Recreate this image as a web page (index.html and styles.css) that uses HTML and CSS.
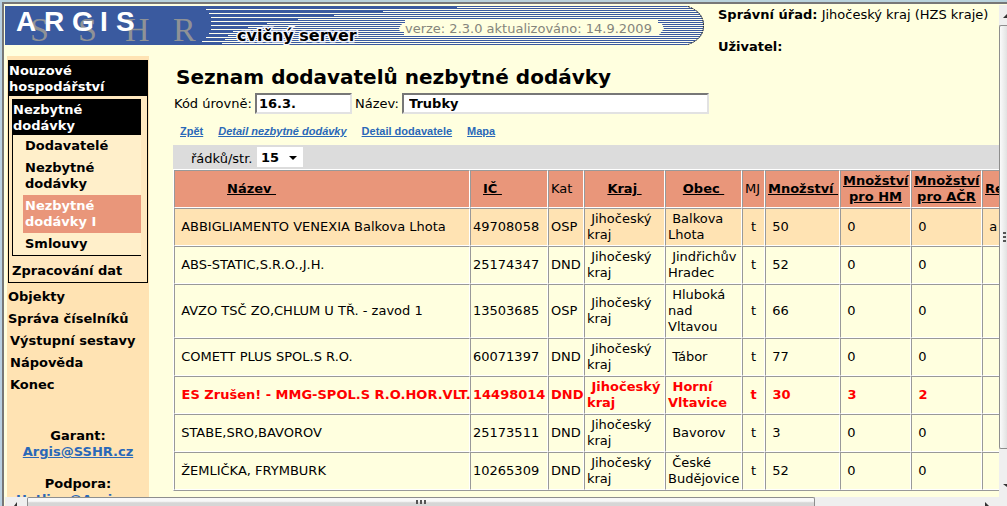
FILE: index.html
```html
<!DOCTYPE html>
<html lang="cs">
<head>
<meta charset="utf-8">
<title>ARGIS – Seznam dodavatelů nezbytné dodávky</title>
<link rel="stylesheet" href="styles.css">
</head>
<body>
<div class="window">
  <div class="page">
    <header class="top">
      <svg class="banner" width="700" height="39" viewBox="5 6 700 39" role="img" aria-label="ARGIS SSHR">
        <defs><clipPath id="shape"><path d="M5 6H687Q704 12 704 25.500Q704 39 687 45H5Z"/></clipPath></defs>
        <g clip-path="url(#shape)">
          <path fill="#3a5a9f" d="M5 6H705V45H5Z"/>
          <path stroke="#ffffee" stroke-width="1" d="M206 9.500H705M209 13.500H705M211 17.500H705M211 21.500H705M211 25.500H705M211 29.500H705M209 33.500H705M206 37.500H705M202 41.500H705M457 7.500H705M383 11.500H705M334 15.500H705M298 19.500H705M267 23.500H705M248 27.500H705M233 31.500H705M228 35.500H705M225 39.500H705M222 43.500H705"/>
        </g>
        <path fill="none" stroke="#222" stroke-dasharray="2 1" d="M688 6.500Q703.500 12 703.500 25.500Q703.500 39 688 44.500"/>
        <path fill="#ffffdf" d="M405 20H658V24H662L664 29L662 31L659 35H404V32H400L399 28L402 24H405Z"/>
        <text class="logo-back" y="41" x="30 78 125 173">SSHR</text>
        <text class="logo-front" y="31" x="16 44 72 100 116">ARGIS</text>
        <text class="server" x="237" y="41">cvičný server</text>
        <text class="version" x="405" y="33">verze: 2.3.0 aktualizováno: 14.9.2009</text>
      </svg>
      <div class="user">
        <p><b>Správní úřad:</b> Jihočeský kraj (HZS kraje)</p>
        <p><b>Uživatel:</b></p>
      </div>
    </header>
    <div class="body">
      <nav class="side">
        <div class="group">
          <a class="head" href="#">Nouzové hospodářství</a>
          <div class="sub">
            <a class="head" href="#">Nezbytné dodávky</a>
            <a class="leaf" href="#">Dodavatelé</a>
            <a class="leaf" href="#">Nezbytné dodávky</a>
            <a class="leaf current" href="#">Nezbytné dodávky I</a>
            <a class="leaf" href="#">Smlouvy</a>
          </div>
          <a class="item" href="#">Zpracování dat</a>
        </div>
        <a class="item flush" href="#">Objekty</a>
        <a class="item flush" href="#">Správa číselníků</a>
        <a class="item" href="#">Výstupní sestavy</a>
        <a class="item" href="#">Nápověda</a>
        <a class="item" href="#">Konec</a>
        <div class="contact">
          <p>Garant:<br><a href="#">Argis@SSHR.cz</a></p>
          <p>Podpora:<br><a href="#">Hotline@Argis.cz</a></p>
        </div>
      </nav>
      <main>
        <h1>Seznam dodavatelů nezbytné dodávky</h1>
        <form class="fields">
          <label for="code">Kód úrovně:</label><input id="code" class="code" value="16.3.">
          <label class="second" for="name">Název:</label><input id="name" class="name" value="Trubky">
        </form>
        <div class="links">
          <a href="#">Zpět</a><a class="active" href="#">Detail nezbytné dodávky</a><a href="#">Detail dodavatele</a><a href="#">Mapa</a>
        </div>
        <div class="bar">
          <label for="rows">řádků/str.</label>
          <span class="picker"><select id="rows"><option>15</option></select><svg width="8" height="4" viewBox="0 0 8 4"><path d="M0 0H8L4 4Z"/></svg></span>
        </div>
        <table>
          <colgroup><col class="c-name"><col class="c-ic"><col class="c-kat"><col class="c-kraj"><col class="c-obec"><col class="c-mj"><col class="c-qty"><col class="c-part"><col class="c-part"><col class="c-last"></colgroup>
          <thead>
            <tr><th class="l title"><a href="#">Název&nbsp;</a></th><th class="l ic"><a href="#">IČ&nbsp;</a></th><th class="l plain">Kat</th><th><a href="#">Kraj&nbsp;</a></th><th><a href="#">Obec&nbsp;</a></th><th class="l plain">MJ</th><th class="l"><a href="#">Množství&nbsp;</a></th><th><a href="#">Množství pro HM</a></th><th><a href="#">Množství pro AČR</a></th><th class="l"><a href="#">Re</a></th></tr>
          </thead>
          <tbody>
            <tr class="selected"><td>&nbsp;ABBIGLIAMENTO VENEXIA Balkova Lhota</td><td>49708058</td><td>OSP</td><td>&nbsp;Jihočeský kraj</td><td>&nbsp;Balkova Lhota</td><td class="mj">t</td><td>&nbsp;50</td><td>&nbsp;0</td><td>&nbsp;0</td><td>&nbsp;a</td></tr>
            <tr><td>&nbsp;ABS-STATIC,S.R.O.,J.H.</td><td>25174347</td><td>DND</td><td>&nbsp;Jihočeský kraj</td><td>&nbsp;Jindřichův Hradec</td><td class="mj">t</td><td>&nbsp;52</td><td>&nbsp;0</td><td>&nbsp;0</td><td></td></tr>
            <tr><td>&nbsp;AVZO TSČ ZO,CHLUM U TŘ. - zavod 1</td><td>13503685</td><td>OSP</td><td>&nbsp;Jihočeský kraj</td><td>&nbsp;Hluboká nad Vltavou</td><td class="mj">t</td><td>&nbsp;66</td><td>&nbsp;0</td><td>&nbsp;0</td><td></td></tr>
            <tr><td>&nbsp;COMETT PLUS SPOL.S R.O.</td><td>60071397</td><td>DND</td><td>&nbsp;Jihočeský kraj</td><td>&nbsp;Tábor</td><td class="mj">t</td><td>&nbsp;77</td><td>&nbsp;0</td><td>&nbsp;0</td><td></td></tr>
            <tr class="cancelled"><td>&nbsp;ES Zrušen! - MMG-SPOL.S R.O.HOR.VLT.</td><td>14498014</td><td>DND</td><td>&nbsp;Jihočeský kraj</td><td>&nbsp;Horní Vltavice</td><td class="mj">t</td><td>&nbsp;30</td><td>&nbsp;3</td><td>&nbsp;2</td><td></td></tr>
            <tr><td>&nbsp;STABE,SRO,BAVOROV</td><td>25173511</td><td>DND</td><td>&nbsp;Jihočeský kraj</td><td>&nbsp;Bavorov</td><td class="mj">t</td><td>&nbsp;3</td><td>&nbsp;0</td><td>&nbsp;0</td><td></td></tr>
            <tr><td>&nbsp;ŽEMLIČKA, FRYMBURK</td><td>10265309</td><td>DND</td><td>&nbsp;Jihočeský kraj</td><td>&nbsp;České Budějovice</td><td class="mj">t</td><td>&nbsp;52</td><td>&nbsp;0</td><td>&nbsp;0</td><td></td></tr>
          </tbody>
        </table>
      </main>
    </div>
  </div>
  <div class="vbar">
    <svg width="8" height="20" viewBox="0 0 8 20"><path fill="#333" d="M4 13L8 9V13Z"/></svg>
    <div class="vthumb"><svg width="6" height="12" viewBox="0 0 6 12"><path stroke="#555" stroke-width="2" d="M3 2H6M3 6H6M3 10H6"/></svg></div>
    <svg class="down" width="8" height="48" viewBox="0 0 8 48"><path fill="#333" d="M4 35H8V38Z"/></svg>
  </div>
  <div class="hbar">
    <svg width="22" height="9" viewBox="0 0 22 9"><path fill="#333" d="M12 5L9 9H12Z"/></svg>
    <div class="hthumb"><svg width="12" height="6" viewBox="0 0 12 6"><path stroke="#555" stroke-width="2" d="M2 2V6M6 2V6M10 2V6"/></svg></div>
    <svg class="right" width="22" height="9" viewBox="0 0 22 9"><path fill="#333" d="M8 5L12 9H8Z"/></svg>
  </div>
  <div class="corner"></div>
</div>
</body>
</html>
```

FILE: styles.css
```css
* { box-sizing: border-box; }

body {
  margin: 0;
  overflow: hidden;
  background: #ffffdf;
  color: #000;
  font: 13px/16px "DejaVu Sans", Verdana, sans-serif;
}

p { margin: 0; }

.window {
  display: grid;
  grid-template-columns: minmax(0, 1fr) 8px;
  grid-template-rows: minmax(0, 1fr) 9px;
  height: 100vh;
  border-top: 2px solid #b9d2dc;
  border-left: 2px solid #b9d0e2;
  box-shadow: inset 2px 2px 0 #777;
  padding: 3px 0 0 3px;
}

.page {
  display: flex;
  flex-direction: column;
  overflow: hidden;
  padding-top: 1px;
}

/* Header */
.top { display: flex; gap: 13px; height: 48px; flex: none; }
.banner { display: block; flex: none; }
.user { flex: 1; padding-top: 1px; white-space: nowrap; }
.user p + p { margin-top: 16px; }

.logo-back { font: 34px "Liberation Serif", serif; fill: #8f9296; }
.logo-front { font: bold 28px "Liberation Sans", Arial, sans-serif; fill: #fff; }
.server {
  font: bold 16px "DejaVu Sans", Verdana, sans-serif;
  fill: #000;
  stroke: #f4f6ff;
  stroke-width: 3px;
  paint-order: stroke;
}
.version { font: 13px "DejaVu Sans", Verdana, sans-serif; fill: #85857c; }

.body { display: flex; flex: 1; gap: 24px; min-height: 0; padding: 2px 0 0 2px; }

/* Side menu */
.side {
  flex: none;
  width: 142px;
  padding: 4px 1px 0;
  background: #ffe3b3;
  font-weight: bold;
}
.side > a, .group a { display: block; color: #000; text-decoration: none; }
.group {
  margin-bottom: 3px;
  border: 1px solid #000;
  border-top: 0;
  background: #ffe8bf;
}
.group .head { padding: 3px 0 1px; background: #000; color: #fff; }
.sub {
  margin: 3px 6px 4px 3px;
  border-left: 1px solid #000;
  border-bottom: 1px solid #000;
  background: #ffefca;
}
.sub .leaf { margin-left: 10px; padding: 3px 2px; }
.sub .current { background: #e9967a; color: #fff; }
.side .item { padding: 3px 2px; white-space: nowrap; }
.group .item { padding-left: 3px; }
.side .flush { padding-left: 0; }
.contact { margin-top: 32px; text-align: center; }
.contact p + p { margin-top: 16px; }
.contact a, .links a { color: #2a68b8; }

/* Content */
main { flex: 1; min-width: 0; overflow: hidden; padding-top: 8px; }

h1 { margin: 0 3px 3px; font-size: 20px; line-height: 26px; white-space: nowrap; }

.fields { display: flex; align-items: center; padding-left: 1px; }
.fields input {
  height: 21px;
  padding: 0 2px;
  border: 2px solid;
  border-color: #777 #e2e2e2 #e2e2e2 #777;
  background: #fff;
  color: #000;
  font: bold 13px "DejaVu Sans", Verdana, sans-serif;
}
.fields label { flex: none; width: 81px; }
.fields .second { width: 47px; margin-left: 3px; }
.fields .code { width: 97px; }
.fields .name { width: 307px; padding-left: 5px; }

.links {
  display: flex;
  gap: 15px;
  padding: 9px 7px 6px;
  font: bold 11px/16px "Liberation Sans", Arial, sans-serif;
}
.links .active { font-style: italic; }

.bar {
  display: flex;
  align-items: center;
  height: 24px;
  padding-left: 18px;
  background: #dcdcdc;
}
.bar label { width: 66px; padding-top: 4px; }
.picker { position: relative; }
.picker select {
  appearance: none;
  display: block;
  width: 46px;
  height: 20px;
  padding: 0 4px;
  border: 0;
  border-radius: 0;
  background: #fff;
  color: #000;
  font: bold 13px "DejaVu Sans", Verdana, sans-serif;
}
.picker svg { position: absolute; right: 6px; top: 9px; pointer-events: none; }

table {
  width: 948px;
  table-layout: fixed;
  border: 1px solid;
  border-color: #fff #999 #999 #fff;
  border-spacing: 0;
}
th, td {
  height: 38px;
  padding: 2px;
  border: 1px solid;
  border-color: #999 #fff #fff #999;
  text-align: left;
  vertical-align: middle;
}
td:first-child, .plain { white-space: nowrap; }
th { background: #e9967a; text-align: center; }
th a { color: #000; }
th.l { text-align: left; }
th.title { padding-left: 52px; }
th.ic { padding-left: 12px; }
.plain { font-weight: normal; }
.mj { text-align: center; }
.selected { background: #ffe3b3; }
.cancelled { color: #f00; font-weight: bold; }

.c-name { width: 296px; }
.c-ic { width: 78px; }
.c-kat { width: 36px; }
.c-kraj { width: 81px; }
.c-obec { width: 77px; }
.c-mj { width: 23px; }
.c-qty { width: 75px; }
.c-part { width: 71px; }

/* Scroll bars */
.vbar { display: flex; flex-direction: column; background: #efefef; }
.vthumb {
  display: flex;
  flex: 1;
  align-items: center;
  border: 1px solid #8e8e8e;
  border-right: 0;
  border-radius: 2px 0 0 2px;
  background: linear-gradient(90deg, #fafafa, #e2e2e2);
}
.hbar { display: flex; background: #efefef; overflow: hidden; }
.hthumb {
  display: flex;
  justify-content: center;
  flex: 0 1 788px;
  border: 1px solid #8e8e8e;
  border-bottom: 0;
  border-radius: 2px 2px 0 0;
  background: linear-gradient(#f8f8f8 40%, #d6d6d6 60%);
}
.hbar .right { margin-left: auto; }
.corner { background: #efefef; }
```
